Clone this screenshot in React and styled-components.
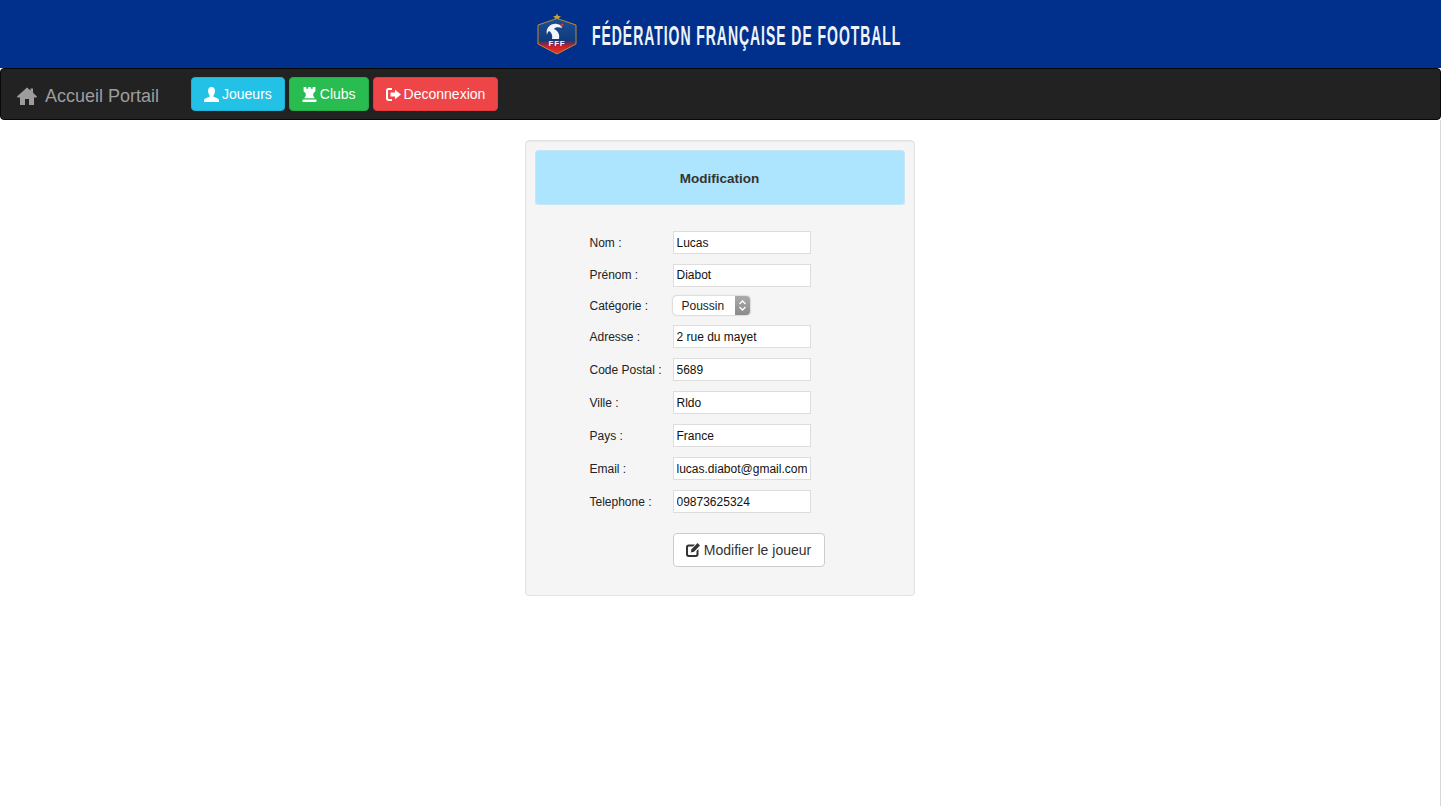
import React from 'react';
import styled, { createGlobalStyle } from 'styled-components';

const GlobalStyle = createGlobalStyle`
    html, body {
        margin: 0;
        padding: 0;
        background: #fff;
    }
    body {
        font-family: "Liberation Sans", Arial, sans-serif;
        font-size: 14px;
        color: #333;
    }
`;

const Page = styled.div`
    min-height: 806px;
    overflow: hidden;
    background: linear-gradient(#d8d8d8, #d8d8d8) no-repeat right 120px / 1px 100%;
`;

const Banner = styled.header`
    height: 68px;
    background-color: #00308c;
    display: flex;
    align-items: center;
    justify-content: center;
    gap: 13px;
    padding-right: 2px;
`;

const BannerTitle = styled.div`
    font-size: 28px;
    font-weight: 700;
    color: #eef3fa;
    letter-spacing: 1.9px;
    line-height: 30px;
    width: 312px;
    margin-top: 3px;
    white-space: nowrap;
    transform: scaleX(0.5);
    transform-origin: left center;
`;

const Navbar = styled.nav`
    height: 50px;
    background-color: #222;
    border: 1px solid #080808;
    border-radius: 4px;
    display: flex;
    align-items: flex-start;
`;

const Brand = styled.a`
    display: flex;
    align-items: center;
    gap: 8px;
    height: 54px;
    padding-left: 16px;
    width: 190px;
    box-sizing: border-box;
    font-size: 18px;
    color: #9d9d9d;
`;

const NavButtons = styled.div`
    display: flex;
    gap: 4px;
    padding-top: 8px;
`;

const NavButton = styled.button`
    height: 34px;
    padding: 0 12px;
    display: flex;
    align-items: center;
    gap: 3px;
    font-family: inherit;
    font-size: 14px;
    color: #fff;
    background-color: ${props => props.$bg};
    border: 1px solid ${props => props.$border};
    border-radius: 4px;
`;

const Main = styled.main`
    display: flex;
    justify-content: center;
    padding-top: 20px;
    padding-right: 2px;
`;

const Well = styled.section`
    width: 390px;
    height: 456px;
    box-sizing: border-box;
    padding: 9px;
    background-color: #f5f5f5;
    border: 1px solid #e3e3e3;
    border-radius: 4px;
    box-shadow: inset 0 1px 1px rgba(0, 0, 0, 0.05);
`;

const Heading = styled.h1`
    margin: 0;
    height: 55px;
    padding-top: 1px;
    display: flex;
    align-items: center;
    justify-content: center;
    font-size: 13.5px;
    font-weight: 700;
    color: #333;
    background-color: #ade5ff;
    border: 1px solid #c8e6f3;
    border-radius: 3px;
    box-sizing: border-box;
`;

const Form = styled.form`
    display: grid;
    grid-template-columns: 83px 138px;
    grid-template-rows: 33px 32px 29px repeat(6, 33px);
    align-items: center;
    padding: 21px 0 0 55px;
`;

const Label = styled.label`
    font-size: 12px;
    color: #222;
`;

const Input = styled.input`
    width: 138px;
    height: 23px;
    box-sizing: border-box;
    padding: 0 3px;
    font-family: inherit;
    font-size: 12px;
    color: #111;
    background: #fff;
    border: 1px solid #ddd;
    outline: none;
`;

const FakeSelect = styled.div`
    width: 77px;
    height: 19px;
    box-sizing: border-box;
    display: flex;
    justify-content: space-between;
    align-items: center;
    padding-left: 9px;
    font-size: 12px;
    color: #222;
    background: #fff;
    border-radius: 4px;
    box-shadow: 0 0 2px rgba(0, 0, 0, 0.35);
    overflow: hidden;
`;

const SelectArrows = styled.span`
    width: 15px;
    height: 19px;
    display: flex;
    align-items: center;
    justify-content: center;
    background: linear-gradient(#aaa, #8b8b8b);
`;

const SubmitRow = styled.div`
    padding: 15px 0 0 138px;
`;

const SubmitButton = styled.button`
    height: 34px;
    width: 152px;
    display: flex;
    align-items: center;
    justify-content: center;
    gap: 4px;
    font-family: inherit;
    font-size: 14px;
    color: #333;
    background: #fff;
    border: 1px solid #ccc;
    border-radius: 4px;
`;

const HomeIcon = () => (
    <svg width="20" height="18" viewBox="0 0 20 18" fill="#9d9d9d">
        <path d="M10 0.5 L13.5 3.6 V1.5 H16 V5.8 L20 9.4 L19.4 10.4 H17 V18 H12 V12 H8 V18 H3 V10.4 H0.6 L0 9.4 Z" />
    </svg>
);

const UserIcon = () => (
    <svg width="15" height="15" viewBox="0 0 14 14" fill="#fff">
        <path d="M7 0 C9.3 0 10.4 1.8 10.2 4 C10 6.2 9.2 7.4 8.8 8 V9.2 C10.5 10 13.3 10.5 14 12 V14 H0 V12 C0.7 10.5 3.5 10 5.2 9.2 V8 C4.8 7.4 4 6.2 3.8 4 C3.6 1.8 4.7 0 7 0 Z" />
    </svg>
);

const TowerIcon = () => (
    <svg width="15" height="15" viewBox="0 0 14 14" fill="#fff">
        <path d="M1.5 0 H4 V1.6 H5.8 V0 H8.2 V1.6 H10 V0 H12.5 V4 L10.5 6 V8.5 L12 10.5 H2 L3.5 8.5 V6 L1.5 4 Z" />
        <rect x="0.5" y="11.7" width="13" height="2.3" />
    </svg>
);

const LogoutIcon = () => (
    <svg width="15" height="13" viewBox="0 0 15 13" fill="#fff">
        <path d="M6 0 V2 H3 C2.4 2 2 2.4 2 3 V10 C2 10.6 2.4 11 3 11 H6 V13 H2.5 C1 13 0 12 0 10.5 V2.5 C0 1 1 0 2.5 0 Z" />
        <path d="M9 1.8 L15 6.5 L9 11.2 V8.5 H4.5 V4.5 H9 Z" />
    </svg>
);

const EditIcon = () => (
    <svg width="14" height="14" viewBox="0 0 14 14" fill="#333">
        <path d="M2.5 1.5 H9 L7 3.5 H3 C2.6 3.5 2 4 2 4.5 V11 C2 11.5 2.5 12 3 12 H9.5 C10 12 10.5 11.5 10.5 11 V8 L12.5 6 V11.5 C12.5 13 11.5 14 10 14 H2.5 C1 14 0 13 0 11.5 V4 C0 2.5 1 1.5 2.5 1.5 Z" />
        <path d="M11.5 0 L14 2.5 L8 8.8 L4.8 9.5 L5.5 6.2 Z" />
    </svg>
);

const ArrowsIcon = () => (
    <svg width="9" height="13" viewBox="0 0 9 13" fill="none" stroke="#fff" strokeWidth="1.3">
        <path d="M1.5 5 L4.5 2 L7.5 5" />
        <path d="M1.5 8 L4.5 11 L7.5 8" />
    </svg>
);

const FffLogo = () => (
    <svg width="44" height="42" viewBox="0 0 44 42">
        <defs>
            <linearGradient id="crestFill" x1="0" y1="0" x2="0" y2="1">
                <stop offset="0" stopColor="#1b4f9c" />
                <stop offset="0.62" stopColor="#123a78" />
                <stop offset="0.78" stopColor="#c8202b" />
                <stop offset="1" stopColor="#e8362b" />
            </linearGradient>
        </defs>
        <path d="M22 0.5 L23.2 3 L26 3.3 L24 5 L24.6 7.6 L22 6.3 L19.4 7.6 L20 5 L18 3.3 L20.8 3 Z" fill="#c5a13a" />
        <path d="M3 12 L22 5.5 L41 12 V31 L22 41 L3 31 Z" fill="url(#crestFill)" stroke="#c08a2a" strokeWidth="1" />
        <path d="M12 22 C10 15 16 10 22 11 C25 11.5 27 13 27 15 C24 14 20 14 19 16 C23 18 25 21 24 26 H17 C18 22 16 19 14 18 C13 19 12 20 12 22 Z" fill="#f2f5fa" />
        <circle cx="27" cy="12" r="1.6" fill="#d8322c" />
        <text x="22" y="33" textAnchor="middle" fontFamily="Liberation Sans" fontWeight="700" fontSize="8" letterSpacing="0.8" fill="#f2f5fa">FFF</text>
    </svg>
);

const fields = [
    { label: 'Nom :', value: 'Lucas' },
    { label: 'Prénom :', value: 'Diabot' },
    { label: 'Catégorie :', select: 'Poussin' },
    { label: 'Adresse :', value: '2 rue du mayet' },
    { label: 'Code Postal :', value: '5689' },
    { label: 'Ville :', value: 'Rldo' },
    { label: 'Pays :', value: 'France' },
    { label: 'Email :', value: 'lucas.diabot@gmail.com' },
    { label: 'Telephone :', value: '09873625324' },
];

const App = () => {
    return (
        <Page>
            <GlobalStyle />
            <Banner>
                <FffLogo />
                <BannerTitle>FÉDÉRATION FRANÇAISE DE FOOTBALL</BannerTitle>
            </Banner>
            <Navbar>
                <Brand><HomeIcon />Accueil Portail</Brand>
                <NavButtons>
                    <NavButton $bg="#23c1e6" $border="#1cb3d6"><UserIcon />Joueurs</NavButton>
                    <NavButton $bg="#28bc51" $border="#22ad48"><TowerIcon />Clubs</NavButton>
                    <NavButton $bg="#ee4549" $border="#e83a3e"><LogoutIcon />Deconnexion</NavButton>
                </NavButtons>
            </Navbar>
            <Main>
                <Well>
                    <Heading>Modification</Heading>
                    <Form>
                        {fields.map(field => (
                            <React.Fragment key={field.label}>
                                <Label>{field.label}</Label>
                                {field.select ?
                                    <FakeSelect>{field.select}<SelectArrows><ArrowsIcon /></SelectArrows></FakeSelect>
                                    :
                                    <Input defaultValue={field.value} />
                                }
                            </React.Fragment>
                        ))}
                    </Form>
                    <SubmitRow>
                        <SubmitButton type="button"><EditIcon />Modifier le joueur</SubmitButton>
                    </SubmitRow>
                </Well>
            </Main>
        </Page>
    );
};

export default App;
